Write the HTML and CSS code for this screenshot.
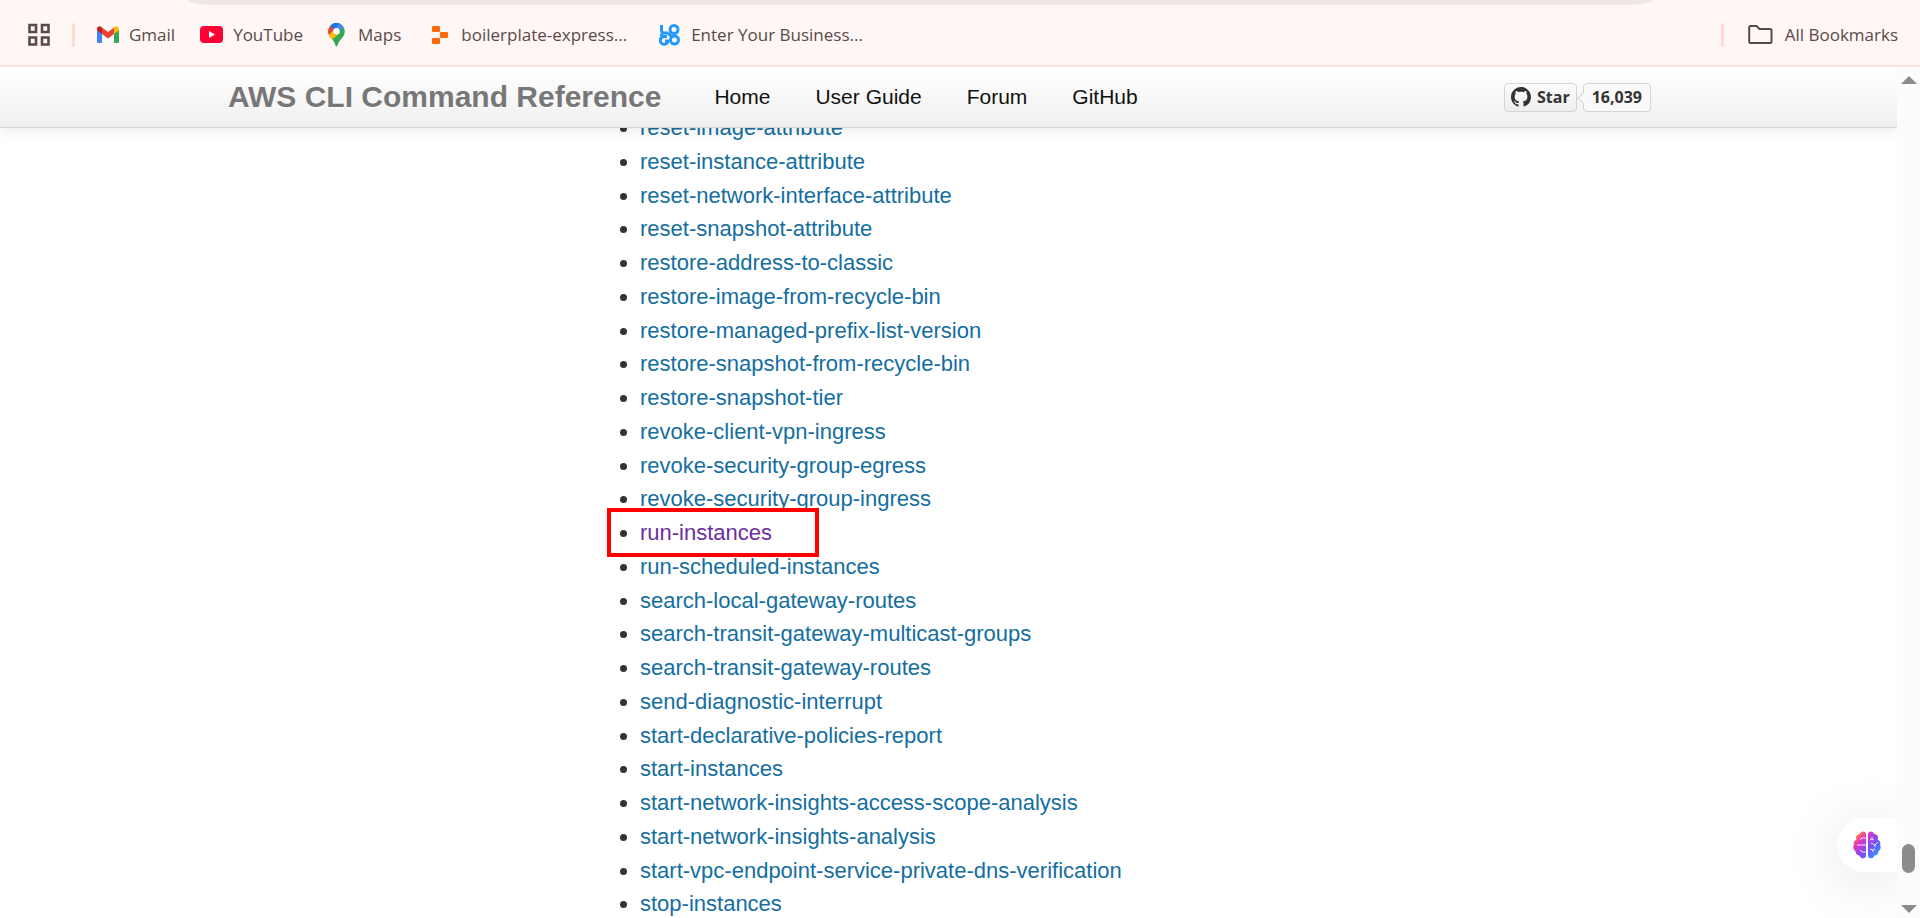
FILE: index.html
```
<!DOCTYPE html>
<html lang="en">
<head>
<meta charset="utf-8">
<title>AWS CLI Command Reference</title>
<link rel="stylesheet" href="styles.css">
</head>
<body>
<div class="window">
  <header class="bookmarks">
    <div class="address"></div>
    <button class="apps" type="button" aria-label="Apps">
      <svg width="22" height="23" viewBox="0 0 22 23" fill="none" stroke="#5a4a47" stroke-width="2.600"><path d="M1.500 2h6.500v7h-6.500zM14 2h6.500v7H14zM1.500 14.500h6.500v7h-6.500zM14 14.500h6.500v7H14z"/></svg>
    </button>
    <span class="rule"></span>
    <nav class="marks" aria-label="Bookmarks">
      <a class="mark gmail" href="#"><svg width="22" height="17" viewBox="0 0 22 17"><path fill="#4285f4" d="M0 3v12.500A1.500 1.500 0 0 0 1.500 17H5V7z"/><path fill="#34a853" d="M17 7v10h3.500a1.500 1.500 0 0 0 1.500-1.500V3z"/><path fill="#ea4335" d="M5 1.500 11 6l6-4.500V8l-6 4.500L5 8z"/><path fill="#c5221f" d="M0 3C0 .4 2.600-.6 4.500 1L5 1.500V8L0 4.300z"/><path fill="#fbbc04" d="M22 3c0-2.600-2.600-3.600-4.500-2l-.5.500V8l5-3.700z"/></svg><span>Gmail</span></a>
      <a class="mark youtube" href="#"><svg width="23" height="17" viewBox="0 0 23 17"><rect width="23" height="17" rx="4" fill="#ff0033"/><path fill="#fff" d="M9 5v7l6-3.500z"/></svg><span>YouTube</span></a>
      <a class="mark maps" href="#"><svg width="17" height="24" viewBox="0 0 17 24"><defs><clipPath id="pin"><path d="M8.500 0a8.300 8.300 0 0 0-8.300 8.300c0 3 1.300 5 3.400 7.400 2.200 2.500 3.200 4.200 3.900 6.700.4 1.500 1.600 1.500 2 0 .7-2.500 1.700-4.200 3.900-6.700 2.100-2.400 3.400-4.400 3.400-7.400A8.300 8.300 0 0 0 8.500 0z"/></clipPath></defs><g clip-path="url(#pin)"><path fill="#34a853" d="M0 0h17v24H0z"/><path fill="#fbbc04" d="M0 12 8 5l4 5-8.500 7z"/><path fill="#4285f4" d="M2 0h15v3L7 12z"/><path fill="#1a73e8" d="M0 0h11L5.500 7 2 3z"/><path fill="#ea4335" d="M0 2.500h2L6 6l-5 6-1 1z"/></g><circle cx="8.500" cy="8.300" r="3.200" fill="#fff"/></svg><span>Maps</span></a>
      <a class="mark boiler" href="#"><svg width="16" height="18" viewBox="0 0 16 18" fill="#fd6a0b"><rect width="8" height="6" rx="1"/><rect x="8" y="6" width="8" height="6" rx="1"/><rect y="12" width="8" height="6" rx="1"/></svg><span>boilerplate-express...</span></a>
      <a class="mark logo" href="#"><svg width="21" height="22" viewBox="0 0 21 22" fill="none" stroke="#2499fb" stroke-width="3"><path d="M2.500 1v5.500a2.500 2.500 0 0 0 2.500 2.500h4"/><circle cx="15" cy="5.500" r="4"/><circle cx="15.500" cy="16" r="4"/><path d="M8 12.500H5a3.900 3.900 0 1 0 4 4.500H6M1.500 10l3 3M9 9l4 4"/></svg><span>Enter Your Business...</span></a>
    </nav>
    <span class="rule"></span>
    <a class="mark all" href="#"><svg width="25" height="19" viewBox="0 0 25 19" fill="none" stroke="#5a4a47" stroke-width="2" stroke-linejoin="round"><path d="M1.200 2.500q0-1.500 1.500-1.500H8.500l3 3H22q1.500 0 1.500 1.500v11q0 1.500-1.500 1.500H2.700q-1.500 0-1.500-1.500z"/></svg><span>All Bookmarks</span></a>
  </header>
  <div class="view">
    <div class="page">
      <header class="top">
        <h1>AWS CLI Command Reference</h1>
        <nav class="nav"><a href="#">Home</a><a href="#">User Guide</a><a href="#">Forum</a><a href="#">GitHub</a></nav>
        <div class="github">
          <a class="star" href="#"><svg width="20" height="20" viewBox="0 0 16 16" fill="#333"><path d="M8 0C3.580 0 0 3.580 0 8c0 3.540 2.290 6.530 5.470 7.590.4.070.55-.17.55-.38 0-.19-.01-.82-.01-1.490-2.010.37-2.530-.49-2.690-.94-.09-.23-.48-.94-.82-1.130-.28-.15-.68-.52-.01-.53.63-.01 1.080.58 1.230.82.72 1.210 1.870.87 2.330.66.07-.52.28-.87.51-1.070-1.780-.2-3.640-.89-3.640-3.950 0-.87.31-1.590.82-2.150-.08-.2-.36-1.020.08-2.120 0 0 .67-.21 2.200.82.64-.18 1.320-.27 2-.27s1.360.09 2 .27c1.530-1.040 2.200-.82 2.200-.82.44 1.100.16 1.920.08 2.120.51.56.82 1.270.82 2.150 0 3.070-1.870 3.750-3.650 3.950.29.25.54.73.54 1.480 0 1.070-.01 1.930-.01 2.200 0 .21.15.46.55.38A8.010 8.010 0 0 0 16 8c0-4.420-3.580-8-8-8z"/></svg><span>Star</span></a>
          <a class="count" href="#">16,039</a>
        </div>
      </header>
      <main class="content">
        <ul class="commands">
          <li><a href="#">reset-image-attribute</a></li>
          <li><a href="#">reset-instance-attribute</a></li>
          <li><a href="#">reset-network-interface-attribute</a></li>
          <li><a href="#">reset-snapshot-attribute</a></li>
          <li><a href="#">restore-address-to-classic</a></li>
          <li><a href="#">restore-image-from-recycle-bin</a></li>
          <li><a href="#">restore-managed-prefix-list-version</a></li>
          <li><a href="#">restore-snapshot-from-recycle-bin</a></li>
          <li><a href="#">restore-snapshot-tier</a></li>
          <li><a href="#">revoke-client-vpn-ingress</a></li>
          <li><a href="#">revoke-security-group-egress</a></li>
          <li><a href="#">revoke-security-group-ingress</a></li>
          <li class="marked"><a href="#">run-instances</a></li>
          <li><a href="#">run-scheduled-instances</a></li>
          <li><a href="#">search-local-gateway-routes</a></li>
          <li><a href="#">search-transit-gateway-multicast-groups</a></li>
          <li><a href="#">search-transit-gateway-routes</a></li>
          <li><a href="#">send-diagnostic-interrupt</a></li>
          <li><a href="#">start-declarative-policies-report</a></li>
          <li><a href="#">start-instances</a></li>
          <li><a href="#">start-network-insights-access-scope-analysis</a></li>
          <li><a href="#">start-network-insights-analysis</a></li>
          <li><a href="#">start-vpc-endpoint-service-private-dns-verification</a></li>
          <li><a href="#">stop-instances</a></li>
        </ul>
      </main>
      <button class="assistant" type="button" aria-label="Assistant">
        <svg width="28" height="28" viewBox="0 0 28 28"><defs><linearGradient id="brain" x1="0" y1="0" x2="1" y2="1"><stop offset="0" stop-color="#ff9a1f"/><stop offset=".12" stop-color="#ff8a2f"/><stop offset=".3" stop-color="#e236c4"/><stop offset=".6" stop-color="#7a4df5"/><stop offset="1" stop-color="#16b4ff"/></linearGradient></defs><path fill="url(#brain)" d="M13 3c0-3-5-3.500-6 0-3-.5-5 3-3.500 5.500C1 9.500 0 12 1 14c-1.500 2-.5 5 1.500 6 0 3 2 4.500 4 4.500C8 28.500 13 28 13 24.500zM15 3c0-3 5-3.500 6 0 3-.5 5 3 3.500 5.500C27 9.500 28 12 27 14c1.500 2 .5 5-1.500 6 0 3-2 4.500-4 4.500-1.500 4-6.500 3.500-6.500 0z"/><path fill="none" stroke="#fff" stroke-opacity=".85" d="M13 7H9L7 9M13 14H4M13 21H9l-2-2M19 6v2l2 1m-2-1-2 1M18 12l4 2 3-3m-3 3v2M17 18l3 1 2-1m-2 1v2"/></svg>
      </button>
    </div>
    <div class="scroll" aria-hidden="true">
      <svg width="16" height="8" viewBox="0 0 16 8"><path fill="#8b8b8b" d="M8 0l8 8H0z"/></svg>
      <span class="thumb"></span>
      <svg width="16" height="8" viewBox="0 0 16 8"><path fill="#8b8b8b" d="M8 8l8-8H0z"/></svg>
    </div>
  </div>
</div>
</body>
</html>
```
FILE: styles.css
```
*, *::before { box-sizing: border-box; }
body {
  margin: 0;
  background: #fff;
  color: #333;
  font-family: "Liberation Sans", Arial, sans-serif;
}
a { text-decoration: none; }
button { border: 0; padding: 0; background: none; }
svg { display: block; flex: none; }

.window { display: flex; flex-direction: column; height: 100vh; overflow: hidden; }

.bookmarks {
  position: relative;
  flex: none;
  display: flex;
  align-items: center;
  height: 67px;
  padding: 4px 22px 0 28px;
  background: #fff7f5;
  border-bottom: 2px solid #fbe3de;
}
.address {
  position: absolute;
  top: 0;
  left: 188px;
  right: 268px;
  height: 5px;
  background: #f2e6e5;
  border-radius: 0 0 24px 24px / 0 0 5px 5px;
}
.rule { width: 3px; height: 24px; border-radius: 2px; background: #ffdbd1; }
.apps { margin-right: 22px; }
.marks { flex: 1; display: flex; align-items: center; margin-left: 22px; gap: 25px; }
.mark {
  display: flex;
  align-items: center;
  gap: 10px;
  color: #5a4a47;
  font: 17px/24px "Open Sans", "Noto Sans", sans-serif;
}
.maps { gap: 13px; }
.boiler { gap: 13px; margin-left: 6px; }
.logo { gap: 11px; margin-left: 7px; }
.all { margin-left: 24px; gap: 12px; }

.view { flex: 1; display: flex; min-height: 0; }
.page { position: relative; flex: 1; display: flex; flex-direction: column; min-width: 0; overflow: hidden; }
.top {
  position: relative;
  z-index: 1;
  flex: none;
  display: flex;
  align-items: center;
  height: 61px;
  padding: 0 246px 0 228px;
  background: linear-gradient(#fff, #f0f0f0);
  border-bottom: 1px solid #d4d4d4;
  box-shadow: 0 1px 13px rgba(0, 0, 0, .1);
}
h1 { margin: 0; color: #777; font-size: 30px; line-height: 36px; text-shadow: 0 1px 0 #fff; white-space: nowrap; }
.nav { flex: 1; display: flex; gap: 45px; margin-left: 53px; font-size: 21px; line-height: 26px; white-space: nowrap; }
.nav a { color: #111; }

.github { display: flex; gap: 6px; font: bold 16px/26px "Open Sans", "Noto Sans", sans-serif; }
.github a { display: flex; align-items: center; height: 29px; border: 1px solid #d4d4d4; border-radius: 4px; color: #333; }
.star { gap: 6px; padding: 0 6px; background: linear-gradient(#fcfcfc, #eee); }
.count { position: relative; padding: 0 8px; background: #fafafa; }
.count::before {
  content: "";
  position: absolute;
  left: -5px;
  top: 10px;
  width: 8px;
  height: 8px;
  background: #fafafa;
  border: 1px solid #d4d4d4;
  border-width: 0 0 1px 1px;
  transform: rotate(45deg);
}

.content { flex: 1; display: flex; min-height: 0; padding-left: 640px; }
.commands {
  flex: 1;
  display: grid;
  grid-auto-rows: 1fr;
  margin: -17px 0 -3px;
  padding: 0;
  font-size: 22px;
  line-height: 33px;
}
.commands li { position: relative; }
.commands a { color: #146ea0; }
.commands .marked a { color: #6b2fa0; }
.marked::before {
  content: "";
  position: absolute;
  left: -33px;
  top: -8px;
  width: 212px;
  height: 49px;
  border: 4px solid #fe0000;
}

.assistant {
  position: absolute;
  right: 0;
  bottom: 46px;
  display: flex;
  align-items: center;
  width: 60px;
  height: 54px;
  padding-left: 16px;
  border-radius: 27px 0 0 27px;
  background: #fff;
  box-shadow: 0 8px 60px rgba(0, 0, 0, .12);
}
.scroll { flex: none; display: flex; flex-direction: column; align-items: center; width: 23px; padding: 9px 0 5px; background: #fcfcfc; }
.thumb { width: 13px; height: 29px; margin: auto 0 32px; border-radius: 7px; background: #8b8b8b; }
```
